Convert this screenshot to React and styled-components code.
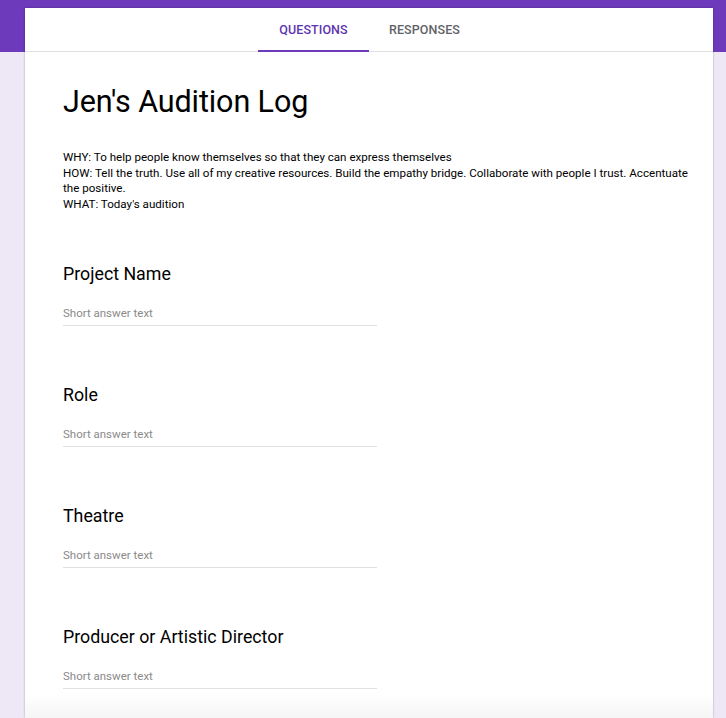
import React from 'react';
import styled, {createGlobalStyle} from 'styled-components';

const PURPLE = '#6c3abb';
const LAVENDER = '#ede7f6';

const questions = ['Project Name', 'Role', 'Theatre', 'Producer or Artistic Director'];

export default function App() {
    return (
        <Page>
            <GlobalStyle />
            <Card>
                <TabBar>
                    <Tab active>QUESTIONS</Tab>
                    <Tab>RESPONSES</Tab>
                </TabBar>
                <Body>
                    <FormTitle>Jen's Audition Log</FormTitle>
                    <Description>
                        WHY: To help people know themselves so that they can express themselves<br/>
                        HOW: Tell the truth. Use all of my creative resources. Build the empathy bridge. Collaborate with people I trust. Accentuate the positive.<br/>
                        WHAT: Today's audition
                    </Description>
                    {questions.map(q => (
                        <Question key={q}>
                            <QuestionTitle>{q}</QuestionTitle>
                            <Answer>Short answer text</Answer>
                        </Question>
                    ))}
                </Body>
                <Fade />
            </Card>
        </Page>
    );
}

const GlobalStyle = createGlobalStyle`
    html, body {
        margin: 0;
        padding: 0;
        height: 100%;
        overflow: hidden;
    }
    body {
        font-family: Roboto, "Liberation Sans", Arial, sans-serif;
        color: #202124;
    }
`
const Page = styled.div`
    width: 726px;
    height: 718px;
    overflow: hidden;
    background: linear-gradient(to bottom, ${PURPLE} 0, ${PURPLE} 52px, ${LAVENDER} 52px);
    padding: 8px 13px 0 25px;
    box-sizing: border-box;
`
const Card = styled.div`
    position: relative;
    width: 688px;
    height: 710px;
    background: #ffffff;
    box-shadow: 0 0 2px rgba(0, 0, 0, 0.28);
    overflow: hidden;
`
const TabBar = styled.div`
    display: flex;
    justify-content: center;
    height: 44px;
    border-bottom: 1px solid #e0e0e0;
    box-sizing: border-box;
`
const Tab = styled.div`
    width: 111px;
    display: flex;
    align-items: center;
    justify-content: center;
    font-size: 12.5px;
    font-weight: 500;
    letter-spacing: 0.1px;
    color: ${p => p.active ? '#5e35b1' : '#5f6368'};
    border-bottom: 2px solid ${p => p.active ? PURPLE : 'transparent'};
    margin-bottom: -1px;
`
const Body = styled.div`
    padding: 30px 24px 0 38px;
`
const FormTitle = styled.div`
    font-size: 30.5px;
    line-height: 40px;
    font-weight: 400;
    color: #000;
    letter-spacing: -0.1px;
`
const Description = styled.div`
    margin-top: 28px;
    font-size: 11.6px;
    line-height: 15.7px;
    color: #000;
`
const Question = styled.div`
    margin-top: 49px;
    & + & {
        margin-top: 57px;
    }
`
const QuestionTitle = styled.div`
    font-size: 17.8px;
    line-height: 24px;
    color: #000;
`
const Answer = styled.div`
    margin-top: 19px;
    width: 314px;
    font-size: 11.5px;
    line-height: 16px;
    padding-bottom: 4px;
    color: #8a8a8a;
    border-bottom: 1px solid #e0e0e0;
`
const Fade = styled.div`
    position: absolute;
    left: 0;
    right: 0;
    bottom: 0;
    height: 24px;
    background: linear-gradient(to bottom, rgba(245,245,245,0), rgba(245,245,245,1));
`
